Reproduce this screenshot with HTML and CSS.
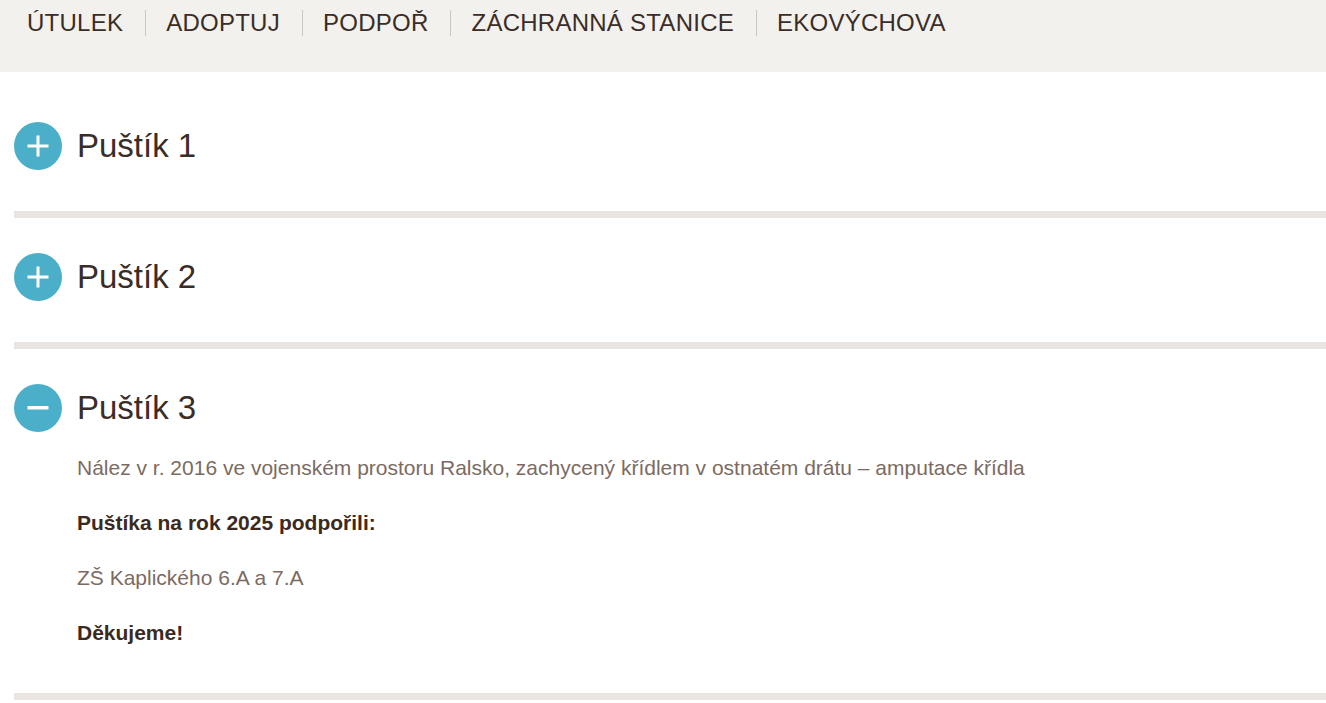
FILE: index.html
```html
<!DOCTYPE html>
<html lang="cs">
<head>
<meta charset="utf-8">
<title>Puštíci</title>
<link rel="stylesheet" href="styles.css">
</head>
<body>
<header class="topbar">
  <ul class="nav">
    <li class="nav-item">ÚTULEK</li>
    <li class="nav-item">ADOPTUJ</li>
    <li class="nav-item">PODPOŘ</li>
    <li class="nav-item">ZÁCHRANNÁ STANICE</li>
    <li class="nav-item">EKOVÝCHOVA</li>
  </ul>
</header>
<main class="accordion">
  <section class="acc-item">
    <div class="acc-head">
      <span class="acc-icon">
        <svg width="48" height="48" viewBox="0 0 48 48"><circle cx="24" cy="24" r="24" fill="#4bafca"/><rect x="13.5" y="22.5" width="21" height="3" fill="#fff"/><rect x="22.5" y="13.5" width="3" height="21" fill="#fff"/></svg>
      </span>
      <h2 class="acc-title">Puštík 1</h2>
    </div>
  </section>
  <section class="acc-item">
    <div class="acc-head">
      <span class="acc-icon">
        <svg width="48" height="48" viewBox="0 0 48 48"><circle cx="24" cy="24" r="24" fill="#4bafca"/><rect x="13.5" y="22.5" width="21" height="3" fill="#fff"/><rect x="22.5" y="13.5" width="3" height="21" fill="#fff"/></svg>
      </span>
      <h2 class="acc-title">Puštík 2</h2>
    </div>
  </section>
  <section class="acc-item acc-open">
    <div class="acc-head">
      <span class="acc-icon">
        <svg width="48" height="48" viewBox="0 0 48 48"><circle cx="24" cy="24" r="24" fill="#4bafca"/><rect x="13.5" y="22" width="21" height="3.5" fill="#fff"/></svg>
      </span>
      <h2 class="acc-title">Puštík 3</h2>
    </div>
    <div class="acc-body">
      <p class="txt">Nález v r. 2016 ve vojenském prostoru Ralsko, zachycený křídlem v ostnatém drátu – amputace křídla</p>
      <p class="txt strong">Puštíka na rok 2025 podpořili:</p>
      <p class="txt">ZŠ Kaplického 6.A a 7.A</p>
      <p class="txt strong">Děkujeme!</p>
    </div>
  </section>
</main>
</body>
</html>
```

FILE: styles.css
```css
* { box-sizing: border-box; }

html, body {
  margin: 0;
  padding: 0;
  background: #ffffff;
  font-family: "Liberation Sans", Arial, sans-serif;
}

.topbar {
  background: #f3f1ee;
  height: 72px;
  padding: 10px 0 0 7px;
}

.nav {
  list-style: none;
  margin: 0;
  padding: 0;
  display: flex;
}

.nav-item {
  font-size: 24px;
  line-height: 26px;
  letter-spacing: 0.25px;
  color: #3a2d27;
  padding: 0 22px 0 20px;
  border-left: 1px solid #cbc4bf;
}

.nav-item:first-child {
  border-left: none;
}

.accordion {
  margin: 15px 0 0 14px;
}

.acc-item {
  padding: 35px 0 41px 0;
  border-bottom: 7px solid #e9e5e2;
}

.acc-open {
  padding-bottom: 20px;
}

.acc-head {
  display: flex;
  align-items: center;
  gap: 15px;
  height: 48px;
}

.acc-icon {
  display: block;
  width: 48px;
  height: 48px;
}

.acc-icon svg {
  display: block;
}

.acc-title {
  margin: 0;
  font-size: 33px;
  font-weight: normal;
  color: #3a2d27;
}

.acc-body {
  padding: 21px 0 0 63px;
}

.txt {
  margin: 0 0 25px 0;
  font-size: 21px;
  line-height: 30px;
  color: #7b6b63;
}

.txt.strong {
  font-weight: bold;
  color: #3b2a22;
}
```
